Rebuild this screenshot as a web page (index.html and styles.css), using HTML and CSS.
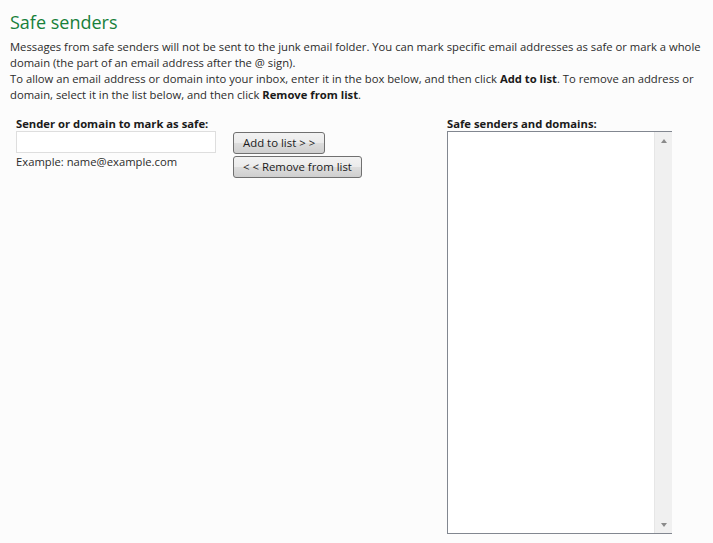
FILE: index.html
```html
<!DOCTYPE html>
<html lang="en">
<head>
    <meta charset="UTF-8">
    <meta name="viewport" content="width=device-width, initial-scale=1.0">
    <title>Safe senders</title>
    <link rel="stylesheet" href="styles.css">
</head>
<body>
    <div class="page">
        <h1>Safe senders</h1>
        <p class="intro">Messages from safe senders will not be sent to the junk email folder. You can mark specific email addresses as safe or mark a whole domain (the part of an email address after the @ sign).</p>
        <p class="intro">To allow an email address or domain into your inbox, enter it in the box below, and then click <b>Add to list</b>. To remove an address or domain, select it in the list below, and then click <b>Remove from list</b>.</p>

        <div class="editor">
            <div class="entry">
                <label class="field-label" for="sender">Sender or domain to mark as safe:</label>
                <input type="text" id="sender" class="textbox">
                <div class="hint">Example: name@example.com</div>
            </div>
            <div class="actions">
                <button class="btn">Add to list &gt; &gt;</button>
                <button class="btn">&lt; &lt; Remove from list</button>
            </div>
            <div class="list-col">
                <div class="field-label">Safe senders and domains:</div>
                <div class="listbox">
                    <div class="list-items"></div>
                    <div class="scrollbar">
                        <span class="arrow up"></span>
                        <span class="arrow down"></span>
                    </div>
                </div>
            </div>
        </div>
    </div>
</body>
</html>
```

FILE: styles.css
```css
body {
    margin: 0;
    background: #fcfcfc;
    font-family: "Open Sans", Arial, sans-serif;
    font-size: 11.25px;
    color: #2b2b2b;
}
.page {
    padding: 9px 10px 0 10px;
}
h1 {
    margin: 0 0 4px 0;
    font-size: 18px;
    font-weight: 400;
    color: #17803a;
    line-height: 26px;
}
.intro {
    margin: 0;
    line-height: 16px;
}
.intro b {
    font-weight: 700;
    color: #1a1a1a;
}
.editor {
    display: flex;
    margin-top: 14px;
}
.entry {
    width: 200px;
    margin-left: 6px;
}
.field-label {
    display: block;
    font-weight: 700;
    color: #1a1a1a;
    line-height: 14px;
}
.textbox {
    display: block;
    box-sizing: border-box;
    width: 200px;
    height: 22px;
    margin: 0;
    border: 1px solid #dedede;
    background: #fff;
    padding: 0 3px;
    font: inherit;
}
.hint {
    margin-top: 1px;
    line-height: 16px;
}
.actions {
    display: flex;
    flex-direction: column;
    align-items: flex-start;
    gap: 2px;
    margin-left: 17px;
    padding-top: 15px;
}
.btn {
    height: 22px;
    padding: 0 9px;
    border: 1px solid #707070;
    border-radius: 3px;
    background: linear-gradient(#f2f2f2, #ebebeb 50%, #dddddd 51%, #cfcfcf);
    font: inherit;
    font-size: 11.4px;
    color: #1a1a1a;
    line-height: 18px;
}
.list-col {
    margin-left: auto;
    margin-right: 31px;
    width: 225px;
}
.listbox {
    display: flex;
    height: 401px;
    border: 1px solid #828790;
    border-right: none;
    background: #fff;
}
.list-items {
    flex: 1;
}
.scrollbar {
    width: 17px;
    background: #f0f0f0;
    border-left: 1px solid #e6e6e6;
    display: flex;
    flex-direction: column;
    justify-content: space-between;
    align-items: center;
    padding: 7px 0 6px 0;
}
.arrow {
    width: 0;
    height: 0;
    border-left: 3px solid transparent;
    border-right: 3px solid transparent;
}
.arrow.up {
    border-bottom: 4px solid #8a8a8a;
}
.arrow.down {
    border-top: 4px solid #8a8a8a;
}
```
